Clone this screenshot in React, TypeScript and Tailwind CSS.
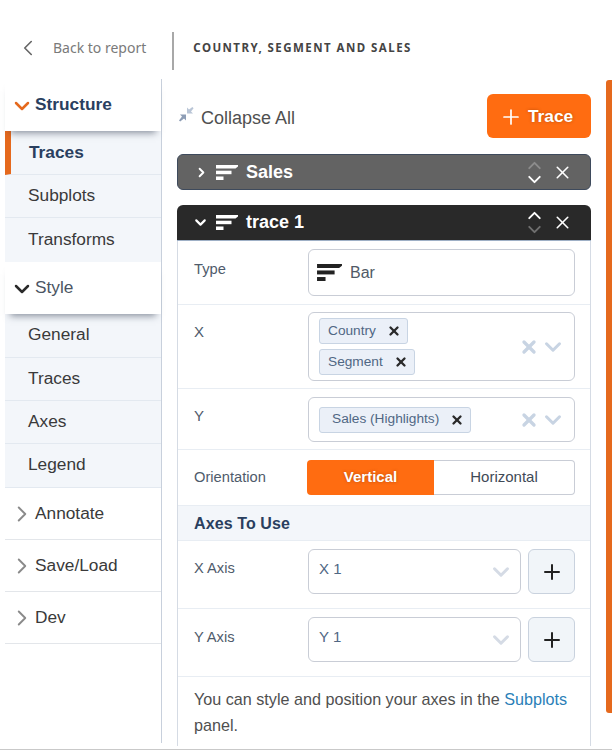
import { ChevronDown, ChevronLeft, ChevronRight, ChevronUp, Plus, X } from 'lucide-react'
import type { ReactNode } from 'react'

function BarIcon({ className, width = 22, height = 15 }: { className?: string; width?: number; height?: number }) {
  return (
    <svg width={width} height={height} viewBox="0 0 22 15" className={className} fill="currentColor">
      <path d="M0 0h22v1.5L19.5 3.5H0z" />
      <rect x="0" y="5.7" width="15.5" height="3.5" />
      <rect x="0" y="11.5" width="7.5" height="3.5" />
    </svg>
  )
}

function CollapseIcon() {
  return (
    <svg width="16" height="16" viewBox="0 0 16 16">
      <path d="M2 8.5h6v6L6 12.5 2.2 15.6 1 14.4 4 10.5z" fill="#8d9db5" />
      <path d="M9 1.5v6h6L13 5.5l2.6-3.2-1.2-1.2L11 3.5z" fill="#b9c5d6" />
    </svg>
  )
}

function SubItem({ label, active }: { label: string; active?: boolean }) {
  return (
    <div
      className={`flex items-center border-b border-[#e3e9f0] text-[17.3px] ${
        active ? 'border-l-[6px] border-l-[#e5691d] pl-[18px] font-bold text-[#2a3f5f]' : 'pb-[1px] pl-[23px] text-[#3a3a3a]'
      }`}
    >
      {label}
    </div>
  )
}

function Row({ label, className, labelClass, children }: { label: string; className: string; labelClass?: string; children: ReactNode }) {
  return (
    <div className={`flex border-b border-[#e8edf3] px-[15px] ${className}`}>
      <div className={`w-[115px] shrink-0 pl-[1px] text-[14.7px] text-[#4f5b6b] ${labelClass ?? ''}`}>{label}</div>
      <div className="flex-1">{children}</div>
    </div>
  )
}

function Tag({ label, pad }: { label: string; pad?: boolean }) {
  return (
    <div className={`flex h-[26px] w-fit items-center rounded-[3px] border border-[#c8d4e3] bg-[#ebf0f8] pr-[6px] text-[13.7px] text-[#506784] ${pad ? 'pl-3' : 'pl-2'}`}>
      <span className="mr-[11px]">{label}</span>
      <X size={14} strokeWidth={4} className="text-[#2a2a2a]" />
    </div>
  )
}

function SelectIcons() {
  return (
    <div className="flex items-center text-[#c8d4e3]">
      <X size={20} strokeWidth={4} />
      <ChevronDown size={26} strokeWidth={2.8} className="ml-[1px]" />
    </div>
  )
}

function AxisRow({ label, value, labelClass }: { label: string; value: string; labelClass: string }) {
  return (
    <Row label={label} className="h-[68px] pt-[8px]" labelClass={labelClass}>
      <div className="flex gap-[7px]">
        <div className="flex h-[45px] w-[213px] items-center justify-between rounded-[6px] border border-[#c9cdd6] pl-[10px] pr-[6px] text-[15px] text-[#506784]">
          <span className="mb-[4px]">{value}</span>
          <ChevronDown size={26} strokeWidth={2.8} className="text-[#d5dbe5]" />
        </div>
        <div className="flex h-[45px] w-[47px] items-center justify-center rounded-[6px] border border-[#c9d2de] bg-[#f1f5f9]">
          <Plus size={24} strokeWidth={2} className="text-[#222]" />
        </div>
      </div>
    </Row>
  )
}

function Arrows({ upClass, downClass }: { upClass: string; downClass: string }) {
  return (
    <div className="mr-[7px] flex flex-col">
      <ChevronUp size={21} strokeWidth={2.2} className={`-mb-[7px] ${upClass}`} />
      <ChevronDown size={21} strokeWidth={2.2} className={downClass} />
    </div>
  )
}

export default function App() {
  return (
    <div className="flex h-[750px] w-[612px] flex-col overflow-hidden border-b border-[#c9c9c9] bg-white [font-family:'Liberation_Sans',Arial,sans-serif]">
      {/* 上部バー */}
      <div className="flex h-[79px] shrink-0 items-start pt-[32px]">
        <ChevronLeft size={26} strokeWidth={1.5} className="ml-[15px] mt-[3px] text-[#666]" />
        <span className="ml-[12px] mt-[5px] font-['Noto_Sans',sans-serif] text-[14px] text-[#7a7a7a]">Back to report</span>
        <div className="ml-[26px] h-[38px] w-[2px] bg-[#a8a8a8]" />
        <span className="ml-[19px] mt-[7px] font-['Noto_Sans',sans-serif] text-[11.5px] font-bold tracking-[1.45px] text-[#444]">
          COUNTRY, SEGMENT AND SALES
        </span>
      </div>

      <div className="flex min-h-0 flex-1">
        {/* サイドバー */}
        <div className="ml-[5px] flex h-[664px] w-[157px] shrink-0 flex-col border-r border-[#c8d0dc]">
          <div className="relative z-10 flex h-[52px] items-center pb-[1px] pl-[5px] text-[17.3px] font-bold text-[#2a3f5f] shadow-[0_7px_7px_-5px_rgba(50,60,80,0.55)]">
            <ChevronDown size={24} strokeWidth={2.5} className="mr-[1px] mt-[2px] text-[#e5691d]" />
            Structure
          </div>
          <div className="grid grid-rows-[44px_43px_44px] bg-[#f3f6fa]">
            <SubItem label="Traces" active />
            <SubItem label="Subplots" />
            <div className="flex items-center pb-[1px] pl-[23px] text-[17.3px] text-[#3a3a3a]">Transforms</div>
          </div>
          <div className="relative z-10 flex h-[52px] items-center pb-[1px] pl-[5px] text-[17.3px] text-[#4b5563] shadow-[0_7px_7px_-5px_rgba(50,60,80,0.55)]">
            <ChevronDown size={24} strokeWidth={2.5} className="mr-[1px] mt-[2px] text-[#2a2a2a]" />
            Style
          </div>
          <div className="grid grid-rows-[44px_43px_43px_44px] bg-[#f3f6fa]">
            <SubItem label="General" />
            <SubItem label="Traces" />
            <SubItem label="Axes" />
            <SubItem label="Legend" />
          </div>
          {['Annotate', 'Save/Load', 'Dev'].map((s) => (
            <div key={s} className="flex h-[52px] items-center border-b border-[#e3e6ea] pl-[4px] text-[17.3px] text-[#3a3a3a]">
              <ChevronRight size={26} strokeWidth={1.75} className="text-[#8a8a8a]" />
              {s}
            </div>
          ))}
        </div>

        {/* メイン */}
        <div className="ml-[15px] w-[414px] shrink-0">
          <div className="mt-[15px] flex h-[44px] items-center justify-between">
            <div className="flex items-center pl-[1px] pt-[4px] text-[18px] text-[#505050]">
              <span className="mb-[9px] mr-[7px]"><CollapseIcon /></span>
              Collapse All
            </div>
            <div className="flex h-[44px] w-[104px] items-center rounded-[6px] bg-[#ff6c11] pl-[12px] pt-[1px] text-[17.3px] font-bold text-white [text-shadow:0_0_3px_rgba(120,50,0,0.5)]">
              <Plus size={24} strokeWidth={1.7} className="mr-[4px]" />
              <span className="ml-[1px]">Trace</span>
            </div>
          </div>

          <div className="mt-[16px] flex h-[36px] items-center rounded-[6px] border border-[#3e4a5c] bg-[#636363] pl-[16px] pr-[17px] text-white">
            <ChevronRight size={15} strokeWidth={3} className="mr-[7px]" />
            <BarIcon className="mr-[8px]" />
            <span className="flex-1 text-[18px] font-bold">Sales</span>
            <Arrows upClass="text-[#8c8c8c]" downClass="text-white" />
            <X size={21} strokeWidth={1.8} />
          </div>

          <div className="mt-[15px] flex h-[36px] items-center rounded-t-[6px] border-b border-[#9fb0c6] bg-[#292929] pl-[15px] pr-[18px] text-white">
            <ChevronDown size={17} strokeWidth={3} className="mr-[7px]" />
            <BarIcon className="mr-[8px]" />
            <span className="flex-1 text-[18px] font-bold">trace 1</span>
            <Arrows upClass="text-white" downClass="text-[#6f6f6f]" />
            <X size={21} strokeWidth={1.8} />
          </div>

          <div className="border-x border-[#d5dbe4]">
            <Row label="Type" className="h-[64px] pt-[8px]" labelClass="pt-[9px]">
              <div className="flex h-[47px] items-center rounded-[6px] border border-[#c9cdd6] pl-[8px] text-[16px] text-[#505a66]">
                <BarIcon width={25} height={17} className="mr-[8px] text-[#222]" />
                Bar
              </div>
            </Row>
            <Row label="X" className="h-[84px] pt-[7px]" labelClass="pt-[9px] text-[15px]">
              <div className="flex h-[69px] items-center justify-between rounded-[6px] border border-[#c9cdd6] pl-[10px] pr-[8px]">
                <div className="flex flex-col gap-[5px]">
                  <Tag label="Country" />
                  <Tag label="Segment" />
                </div>
                <SelectIcons />
              </div>
            </Row>
            <Row label="Y" className="h-[61px] pt-[8px]" labelClass="pt-[8px] text-[15px]">
              <div className="flex h-[45px] items-center justify-between rounded-[6px] border border-[#c9cdd6] pl-[10px] pr-[8px]">
                <Tag label="Sales (Highlights)" pad />
                <SelectIcons />
              </div>
            </Row>
            <Row label="Orientation" className="h-[56px] items-center">
              <div className="-ml-[1px] flex h-[35px] text-[15px]">
                <div className="flex w-[127px] items-center justify-center rounded-l-[4px] bg-[#ff6c11] font-bold text-white [text-shadow:0_0_3px_rgba(120,50,0,0.5)]">Vertical</div>
                <div className="flex w-[141px] items-center justify-center rounded-r-[4px] border border-l-0 border-[#c9cdd6] text-[#3f4a57]">Horizontal</div>
              </div>
            </Row>
            <div className="flex h-[35px] items-center border-b border-[#e8edf3] bg-[#f3f6fa] pl-[16px] pt-[2px] text-[16px] font-bold tracking-[0.1px] text-[#2a3f5f]">
              Axes To Use
            </div>
            <AxisRow label="X Axis" value="X 1" labelClass="pt-[8px]" />
            <AxisRow label="Y Axis" value="Y 1" labelClass="pt-[9px]" />
            <div className="h-[69px] pl-[16px] pr-[8px] pt-[9px] text-[16.17px] leading-[26px] text-[#4f4f4f]">
              You can style and position your axes in the <span className="text-[#2b7fb8]">Subplots</span> panel.
            </div>
          </div>
        </div>

        {/* スクロールバー */}
        <div className="ml-[15px] mt-[1px] h-[633px] w-[6px] rounded-l-[3px] bg-[#e5691d]" />
      </div>
    </div>
  )
}
